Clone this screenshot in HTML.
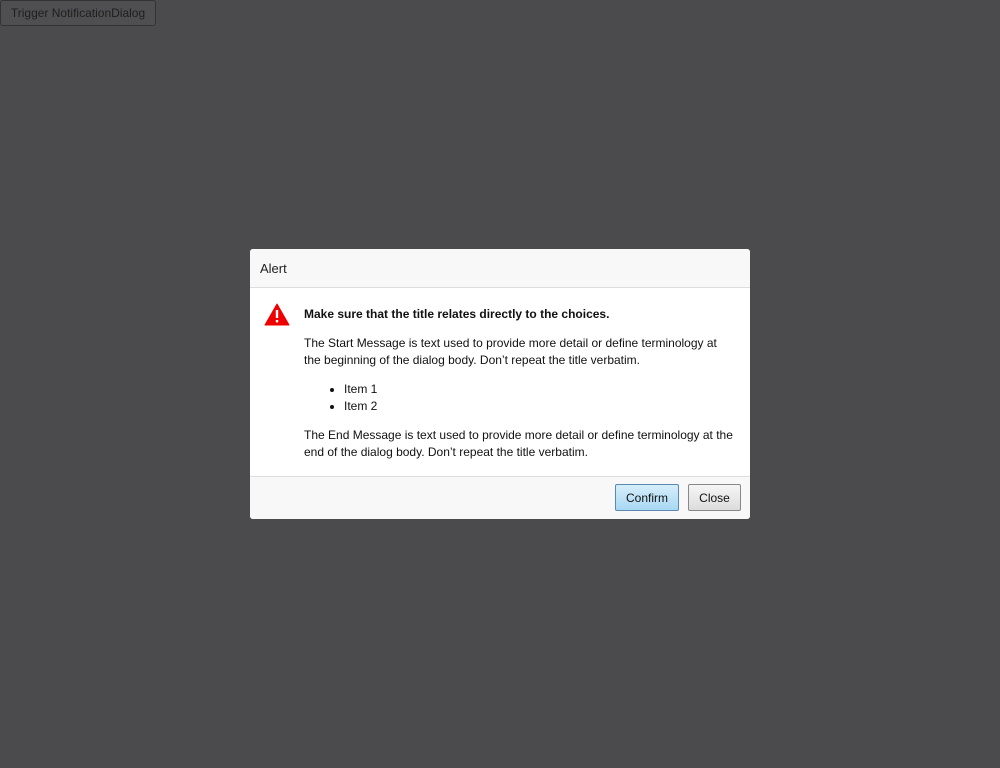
<!DOCTYPE html>
<html><head><style>
body{margin:0;width:1000px;height:768px;background:#4b4b4d;font-family:"Liberation Sans",sans-serif;position:relative;overflow:hidden}
.trig{position:absolute;left:0;top:0;width:154px;height:24px;border:1px solid #333;border-radius:3px;background:#4f4f51;color:#1e1e1e;font-size:12px;line-height:25px;text-align:center;box-sizing:content-box}
.dlg{position:absolute;left:250px;top:249px;width:500px;height:270px;background:#fff;border-radius:3px;overflow:hidden}
.hd{height:38px;background:#f8f8f8;border-bottom:1px solid #ddd;font-size:13px;color:#222;line-height:39px;padding-left:10px}
.bd{position:absolute;left:54px;top:57px;width:432px;font-size:12px;color:#111;line-height:17px}
.bd p{margin:0}
.ft{position:absolute;left:0;top:227px;width:500px;height:43px;background:#f8f8f8;border-top:1px solid #ddd}
.btn{position:absolute;top:7px;height:27px;border:1px solid #888;border-radius:2px;font-size:12px;line-height:26px;text-align:center;color:#111;box-sizing:border-box}
</style></head><body>
<div class="trig">Trigger NotificationDialog</div>
<div class="dlg">
<div class="hd">Alert</div>
<svg style="position:absolute;left:14px;top:54px" width="26" height="24" viewBox="0 0 26 24"><path d="M13 1 L25 22 L1 22 Z" fill="#e00" stroke="#e00" stroke-linejoin="round"/><rect x="11.8" y="7" width="2.4" height="8" fill="#fff"/><rect x="11.8" y="17" width="2.4" height="2.4" fill="#fff"/></svg>
<div class="bd">
<p style="font-weight:bold">Make sure that the title relates directly to the choices.</p>
<p style="margin-top:12px;width:420px">The Start Message is text used to provide more detail or define terminology at the beginning of the dialog body. Don’t repeat the title verbatim.</p>
<ul style="margin:12px 0 12px;padding-left:40px"><li>Item 1</li><li>Item 2</li></ul>
<p>The End Message is text used to provide more detail or define terminology at the end of the dialog body. Don’t repeat the title verbatim.</p>
</div>
<div class="ft">
<div class="btn" style="left:365px;width:64px;background:linear-gradient(#d6eefb,#a8d8f3);border-color:#5a8ab0">Confirm</div>
<div class="btn" style="left:438px;width:53px;background:linear-gradient(#f6f6f6,#dcdcdc)">Close</div>
</div>
</div>
</body></html>
